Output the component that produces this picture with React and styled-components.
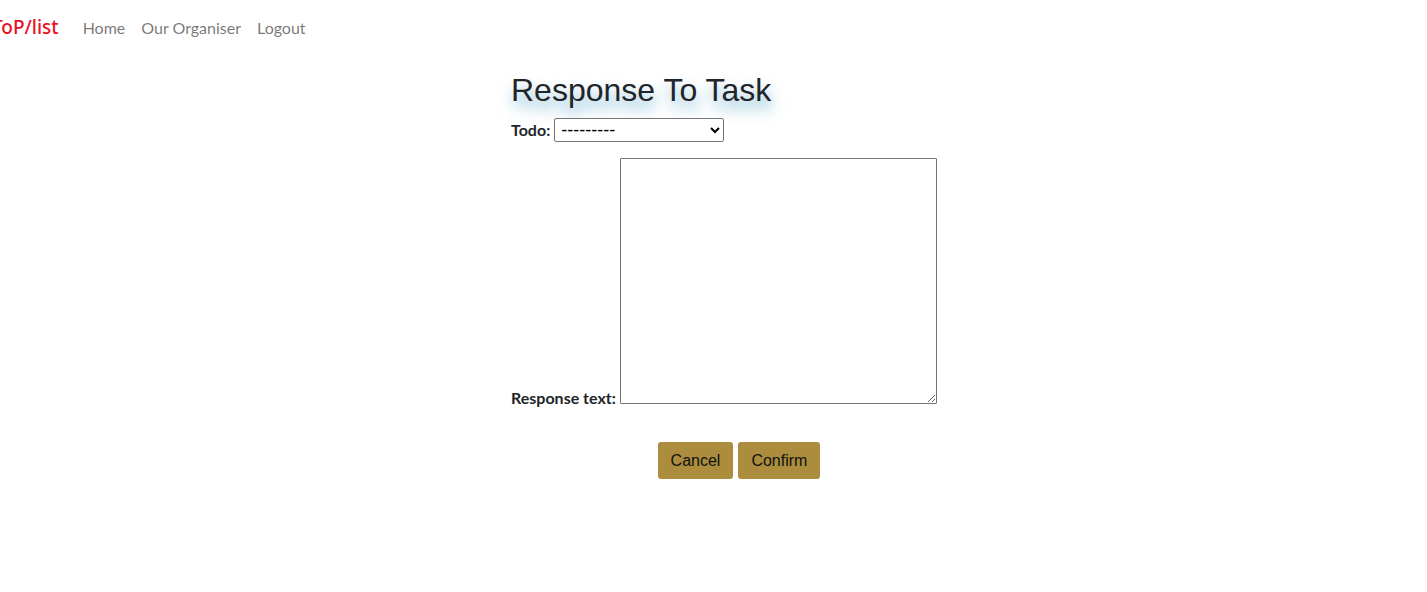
import styled, { createGlobalStyle } from 'styled-components'

const Global = createGlobalStyle`
  body {
    margin: 0;
    font-family: Lato, "Liberation Sans", sans-serif;
    color: #212529;
    background: #fff;
  }
`

const Nav = styled.nav`
  display: flex;
  align-items: center;
  height: 54px;
  margin-left: -8px;
`

const Brand = styled.a`
  font-family: "Noto Sans", "Open Sans", sans-serif;
  font-size: 19px;
  font-weight: 500;
  color: #e8101f;
  text-decoration: none;
  margin-right: 16px;
`

const NavLink = styled.a`
  font-size: 16px;
  color: rgba(0, 0, 0, 0.55);
  text-decoration: none;
  padding: 0 8px;
`

const Main = styled.main`
  width: 456px;
  margin: 17px auto 0 511px;
`

const Heading = styled.h1`
  font-family: "Liberation Sans", Arial, sans-serif;
  font-weight: 400;
  font-size: 32px;
  line-height: 38px;
  margin: 0;
  color: #212529;
  text-shadow: 2px 9px 14px rgba(31, 135, 184, 0.6);
`

const Row = styled.div`
  display: flex;
  align-items: ${p => (p.$bottom ? 'flex-end' : 'center')};
  margin-top: ${p => p.$top || 0}px;
`

const Label = styled.label`
  font-weight: 700;
  font-size: 16px;
  margin-right: 4px;
  line-height: 18px;
  margin-bottom: ${p => (p.$bottom ? '-3px' : '0')};
`

const Select = styled.select`
  width: 170px;
  height: 24px;
  font-family: "Liberation Sans", Arial, sans-serif;
  font-size: 18px;
  line-height: 20px;
  padding: 0 2px;
  border: 1px solid #767676;
  border-radius: 2px;
  background: #fff;
  color: #000;
`

const TextArea = styled.textarea`
  width: 317px;
  height: 246px;
  box-sizing: border-box;
  border: 1px solid #767676;
  border-radius: 1px;
  margin: 0;
`

const Buttons = styled.div`
  display: flex;
  justify-content: center;
  gap: 5px;
  margin-top: 38px;
`

const Button = styled.button`
  font-family: "Liberation Sans", Arial, sans-serif;
  font-size: 16px;
  color: #111;
  background: #ab8d3d;
  border: none;
  border-radius: 3px;
  height: 37px;
  padding: 0 13px;
`

export default function App() {
  return (
    <>
      <Global />
      <Nav>
        <Brand>ToP/list</Brand>
        <NavLink>Home</NavLink>
        <NavLink>Our Organiser</NavLink>
        <NavLink>Logout</NavLink>
      </Nav>
      <Main>
        <Heading>Response To Task</Heading>
        <Row $top={9}>
          <Label>Todo:</Label>
          <Select>
            <option>---------</option>
          </Select>
        </Row>
        <Row $bottom $top={16}>
          <Label $bottom>Response text:</Label>
          <TextArea />
        </Row>
        <Buttons>
          <Button>Cancel</Button>
          <Button>Confirm</Button>
        </Buttons>
      </Main>
    </>
  )
}
